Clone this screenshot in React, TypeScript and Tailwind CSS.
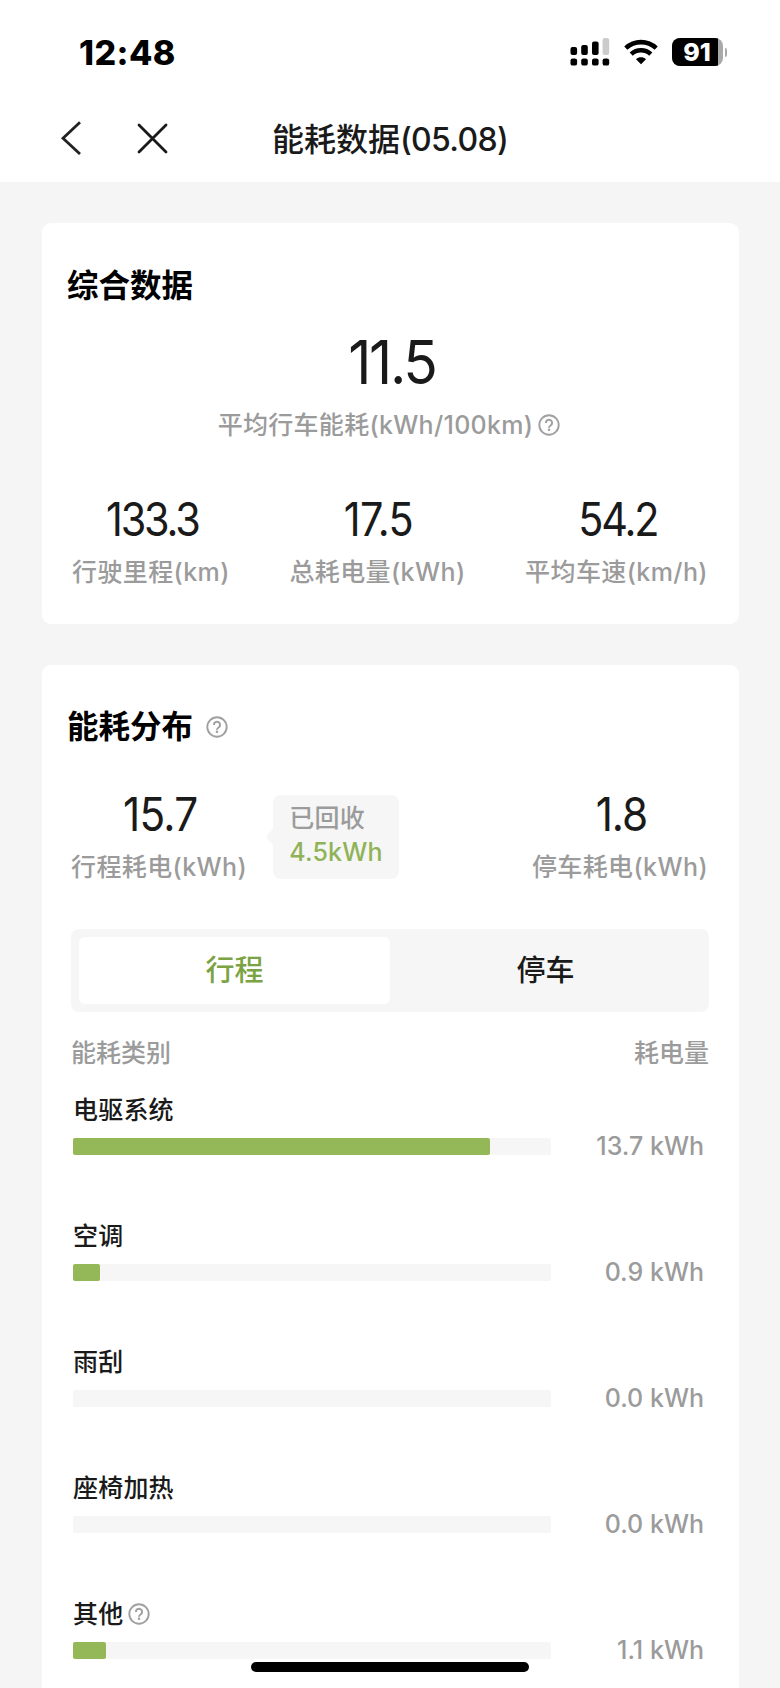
import React from 'react';

interface Metric {
  value: string;
  label: string;
  valueClass?: string;
}

interface Category {
  name: string;
  kwh: number;
  hasHelp?: boolean;
}

const TRIP_TOTAL = 15.7;

const categories: Category[] = [
  { name: '电驱系统', kwh: 13.7 },
  { name: '空调', kwh: 0.9 },
  { name: '雨刮', kwh: 0 },
  { name: '座椅加热', kwh: 0 },
  { name: '其他', kwh: 1.1, hasHelp: true },
];

const HelpIcon = () => (
  <svg width="22" height="22" viewBox="0 0 22 22" fill="none" stroke="#a0a0a0" className="shrink-0">
    <circle cx="11" cy="11" r="9.7" strokeWidth="1.9" />
    <path d="M7.9 8.9a3.1 3.1 0 1 1 4.7 2.6c-1 .6-1.6 1-1.6 2.2" strokeWidth="2" />
    <circle cx="11" cy="15.8" r="1.3" fill="#a0a0a0" stroke="none" />
  </svg>
);

const StatusBar = () => (
  <div className="flex h-[104px] items-center justify-between pr-[53px] pl-[79px]">
    <span className="pt-[1px] text-[34px] leading-none font-extrabold tracking-[0.4px] text-black">12:48</span>
    <div className="flex items-center">
      <svg width="40" height="28" viewBox="0 0 40 28">
        <rect x="0.5" y="9" width="6.6" height="8" rx="2" />
        <rect x="11.2" y="7" width="6.6" height="10" rx="2" />
        <rect x="22" y="3.5" width="6.6" height="13.5" rx="2" />
        <rect x="32.6" y="0" width="6.6" height="17" rx="2" fill="#cccccc" />
        <rect x="0.5" y="20.4" width="6.6" height="7.2" rx="2.2" />
        <rect x="11.2" y="20.4" width="6.6" height="7.2" rx="2.2" />
        <rect x="22" y="20.4" width="6.6" height="7.2" rx="2.2" />
        <rect x="32.6" y="20.4" width="6.6" height="7.2" rx="2.2" />
      </svg>
      <svg width="34" height="26" viewBox="0 0 34 26" fill="none" stroke="#000" strokeWidth="4.6" className="ml-[14px]">
        <path d="M1.8 9.2C10.4 1.1 23.6 1.1 32.2 9.2" />
        <path d="M7.2 15.1c5.6-5.1 14-5.1 19.6 0" />
        <path d="M17 25.2l-5-5c2.8-2.5 7.2-2.5 10 0z" fill="#000" stroke="none" />
      </svg>
      <div className="ml-[14px] flex items-center">
        <div className="flex h-[28px] w-[51px] overflow-hidden rounded-[8px] bg-[#a9a9a9]">
          <div className="flex w-[46px] items-center justify-center bg-black pl-[4px] text-[25px] leading-none font-extrabold text-white">
            91
          </div>
        </div>
        <div className="ml-[1.5px] h-[9px] w-[2.5px] rounded-r-full bg-[#a9a9a9]" />
      </div>
    </div>
  </div>
);

const NavBar = () => (
  <div className="flex h-[78px] items-center pb-[10px] pl-[60px]">
    <svg width="22" height="34" viewBox="0 0 22 34" fill="none" stroke="#222" strokeWidth="2.8">
      <path d="M20 1.2L3 17.2L20 33" />
    </svg>
    <svg width="31" height="31" viewBox="0 0 31 31" fill="none" stroke="#1a1a1a" strokeWidth="2.8" strokeLinecap="round" className="ml-[55px]">
      <path d="M2 2L29 29M29 2L2 29" />
    </svg>
    <h1 className="ml-[104px] pt-[4px] text-[32px] leading-none font-medium whitespace-nowrap text-[#1a1a1a]">
      能耗数据<span className="tracking-[-0.7px]">(05.08)</span>
    </h1>
  </div>
);

const MetricBlock = ({ value, label, valueClass = 'text-[46px] tracking-[-2.4px]' }: Metric) => (
  <div className="flex flex-col items-center">
    <span className={`h-[48px] scale-x-90 pl-[3px] leading-[50px] text-[#1a1a1a] ${valueClass}`}>{value}</span>
    <span className="mt-[15px] h-[30px] text-[25px] leading-[30px] font-medium tracking-[0.4px] whitespace-nowrap text-[#9b9b9b]">
      {label}
    </span>
  </div>
);

const SummaryCard = () => (
  <section className="h-[401px] rounded-[9px] bg-white pt-[43px]">
    <h2 className="pl-[25px] text-[31.5px] leading-[40px] font-bold text-black">综合数据</h2>
    <div className="mt-[24px] flex flex-col items-center">
      <span className="h-[64px] scale-x-95 pl-[4px] text-[60px] leading-[64px] tracking-[-2.4px] text-[#1a1a1a]">11.5</span>
      <div className="mt-[16px] flex h-[30px] items-center gap-[5px] pr-[3px] text-[25px] leading-[30px] font-medium text-[#9b9b9b]">
        <span className="tracking-[0.3px] whitespace-nowrap">平均行车能耗(kWh/100km)</span>
        <HelpIcon />
      </div>
    </div>
    <div className="mt-[54px] flex justify-between pr-[31px] pl-[30px]">
      <MetricBlock value="133.3" label="行驶里程(km)" />
      <MetricBlock value="17.5" label="总耗电量(kWh)" valueClass="text-[46px] tracking-[-0.6px]" />
      <MetricBlock value="54.2" label="平均车速(km/h)" />
    </div>
  </section>
);

const RecoveredBubble = () => (
  <div className="relative mt-[6px] ml-[26px] h-[84px] w-[126px] rounded-[8px] bg-[#f6f6f6] pt-[6px] pl-[16px] text-[25px] font-medium">
    <svg width="8" height="18" viewBox="0 0 8 18" className="absolute top-[33px] left-[-7px]">
      <path d="M8 0L1 7.5Q0 9 1 10.5L8 18z" fill="#f6f6f6" />
    </svg>
    <p className="leading-[34px] tracking-[0.3px] text-[#9b9b9b]">已回收</p>
    <p className="leading-[35px] tracking-[0.2px] text-[#8fb356]">4.5kWh</p>
  </div>
);

const CategoryRow = ({ name, kwh, hasHelp }: Category) => (
  <div className="h-[126px]">
    <div className="flex h-[30px] items-center gap-[5px] text-[25px] leading-[30px] font-medium tracking-[0.2px] text-[#1a1a1a]">
      {name}
      {hasHelp && <HelpIcon />}
    </div>
    <div className="mt-[8px] flex h-[27px] items-center justify-between">
      <div className="h-[17px] w-[478px] rounded-[2px] bg-[#f6f6f6]">
        <div className="h-full rounded-[2px] bg-[#94b757]" style={{ width: `${(kwh / TRIP_TOTAL) * 100}%` }} />
      </div>
      <span className="text-[25px] leading-none font-medium whitespace-nowrap text-[#9b9b9b]">{kwh.toFixed(1)} kWh</span>
    </div>
  </div>
);

const DistributionCard = () => (
  <section className="mt-[41px] h-[1100px] rounded-[9px] bg-white pt-[42px]">
    <h2 className="flex items-center gap-[13px] pl-[25px] text-[31.5px] leading-[40px] font-bold text-black">
      能耗分布
      <HelpIcon />
    </h2>
    <div className="mt-[42px] flex pr-[31px] pl-[29px]">
      <MetricBlock value="15.7" label="行程耗电(kWh)" valueClass="text-[47px] tracking-[-0.8px]" />
      <RecoveredBubble />
      <div className="ml-auto">
        <MetricBlock value="1.8" label="停车耗电(kWh)" valueClass="text-[47px] tracking-[-1.2px]" />
      </div>
    </div>
    <div className="mx-[29px] mt-[47px] flex h-[83px] w-[638px] rounded-[8px] bg-[#f6f6f6] p-[8px] text-[29px] font-medium">
      <button className="w-[311px] rounded-[6px] bg-white text-[#7ba343]">行程</button>
      <button className="flex-1 text-[#1a1a1a]">停车</button>
    </div>
    <div className="mt-[26px] flex h-[30px] justify-between pr-[30px] pl-[29px] text-[25px] leading-[30px] font-medium text-[#9b9b9b]">
      <span>能耗类别</span>
      <span>耗电量</span>
    </div>
    <div className="mt-[27px] pr-[35px] pl-[31px]">
      {categories.map((category) => (
        <CategoryRow key={category.name} {...category} />
      ))}
    </div>
  </section>
);

export default function App() {
  return (
    <div className="relative h-[1688px] w-[780px] overflow-hidden bg-[#f5f5f5] font-['Inter','Noto_Sans_CJK_SC',sans-serif]">
      <header className="h-[182px] bg-white">
        <StatusBar />
        <NavBar />
      </header>
      <main className="pt-[41px] pr-[41px] pl-[42px]">
        <SummaryCard />
        <DistributionCard />
      </main>
      {/* Home indicator */}
      <div className="absolute bottom-[16px] left-[251px] h-[10px] w-[278px] rounded-full bg-black" />
    </div>
  );
}
